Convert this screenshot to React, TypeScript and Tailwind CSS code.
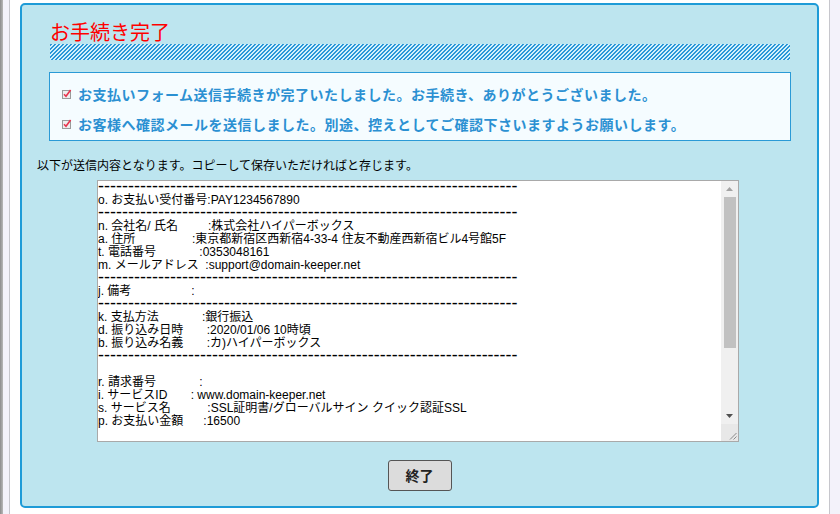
const jp = "font-['Noto_Sans_CJK_JP','Noto_Sans',sans-serif]";
const mono = "font-['Liberation_Sans','Noto_Sans_CJK_JP',sans-serif]";

const DASH = "-".repeat(70);

const lines: string[] = [
  DASH,
  "o. お支払い受付番号:PAY1234567890",
  DASH,
  "n. 会社名/ 氏名         :株式会社ハイパーボックス",
  "a. 住所                 :東京都新宿区西新宿4-33-4 住友不動産西新宿ビル4号館5F",
  "t. 電話番号             :0353048161",
  "m. メールアドレス  :support@domain-keeper.net",
  DASH,
  "j. 備考                  :",
  DASH,
  "k. 支払方法             :銀行振込",
  "d. 振り込み日時       :2020/01/06 10時頃",
  "b. 振り込み名義       :カ)ハイパーボックス",
  DASH,
  "",
  "r. 請求番号             :",
  "i. サービスID       : www.domain-keeper.net",
  "s. サービス名           :SSL証明書/グローバルサイン クイック認証SSL",
  "p. お支払い金額      :16500",
  "",
];

function CheckIcon() {
  return (
    <svg width="10" height="10" viewBox="0 0 10 10" className="shrink-0">
      <rect x="0.5" y="1.5" width="8" height="8" fill="#eeeeee" stroke="#9b9b9b" />
      <path d="M2 5.2 L4 7.3 L8.6 1" fill="none" stroke="#e8344e" strokeWidth="1.6" />
    </svg>
  );
}

function Notice({ text }: { text: string }) {
  return (
    <div className="flex h-[30px] items-center gap-[6px]">
      <CheckIcon />
      <span className={`${jp} text-[14px] font-bold tracking-[0.5px] text-[#2b90d2]`}>{text}</span>
    </div>
  );
}

function ScrollBar() {
  return (
    <div className="flex w-[17px] flex-col bg-[#f0f0f0]">
      <div className="flex h-[16px] items-center justify-center">
        <svg width="7" height="4" viewBox="0 0 7 4">
          <polygon points="0,4 3.5,0 7,4" fill="#a3a3a3" />
        </svg>
      </div>
      <div className="flex-1 pl-[3px] pr-[2px]">
        <div className="h-[151px] bg-[#c1c1c1]" />
      </div>
      <div className="flex h-[17px] items-center justify-center">
        <svg width="7" height="4" viewBox="0 0 7 4">
          <polygon points="0,0 7,0 3.5,4" fill="#505050" />
        </svg>
      </div>
      <div className="h-[17px] bg-[#e8e8e8]">
        <svg width="17" height="17" viewBox="0 0 17 17">
          <line x1="15.5" y1="9" x2="9" y2="15.5" stroke="#8a8a8a" />
          <line x1="15.5" y1="12.5" x2="12.5" y2="15.5" stroke="#8a8a8a" />
        </svg>
      </div>
    </div>
  );
}

function SentContent() {
  return (
    <div className="ml-[75px] mt-[7px] flex h-[262px] w-[642px] border border-[#a9a9a9] bg-white">
      <div className={`${mono} flex-1 overflow-hidden text-[12px] leading-[13px] text-black`}>
        {lines.map((l, i) =>
          l === DASH ? (
            <div key={i} className="h-[13px] overflow-hidden whitespace-pre text-[18px] leading-[11px]">
              {l}
            </div>
          ) : (
            <div key={i} className="h-[13px] whitespace-pre">
              {l}
            </div>
          )
        )}
      </div>
      <ScrollBar />
    </div>
  );
}

export default function App() {
  return (
    <div className="flex h-[514px] w-[840px] overflow-hidden bg-white">
      <div className="w-[3px] bg-linear-to-r from-[#8c8c8c] to-[#b8b8b8]" />
      <div className="w-[6px] bg-[#f3f2fa]" />
      <div className="w-px bg-[#c6c6cc]" />
      <div className="flex-1 px-[10px] pt-[3px]">
        <div className="flex h-[505px] flex-col rounded-[5px] border-2 border-[#1e9bd7] bg-[#bde5ef] pb-[15px] pt-[15px]">
          <div className="ml-[27px] mr-[26px]">
            <h1 className={`${jp} px-px text-[20px] font-normal leading-[24px] text-[#ff0000]`}>お手続き完了</h1>
            <div className="mx-px h-[16px] bg-[linear-gradient(135deg,#2a97d8_25%,#d3f0fb_25%,#d3f0fb_50%,#2a97d8_50%,#2a97d8_75%,#d3f0fb_75%)] bg-[length:4px_4px]" />
            <div className="mt-[12px] border border-[#2a9ad6] bg-[#f5fcff] pb-px pl-[12px] pt-[6px]">
              <Notice text="お支払いフォーム送信手続きが完了いたしました。お手続き、ありがとうございました。" />
              <Notice text="お客様へ確認メールを送信しました。別途、控えとしてご確認下さいますようお願いします。" />
            </div>
          </div>
          <p className={`${jp} ml-[15px] mt-[16px] text-[12px] leading-[16px] text-black`}>
            以下が送信内容となります。コピーして保存いただければと存じます。
          </p>
          <SentContent />
          <button
            type="button"
            className={`${jp} mx-auto mt-[18px] h-[31px] w-[64px] rounded-[3px] border border-[#555555] bg-[#dcdcdc] text-[14px] font-bold text-[#222222]`}
          >
            終了
          </button>
        </div>
      </div>
      <div className="w-px bg-[#c6c6cc]" />
      <div className="w-[10px] bg-[#f3f2fa]" />
    </div>
  );
}
